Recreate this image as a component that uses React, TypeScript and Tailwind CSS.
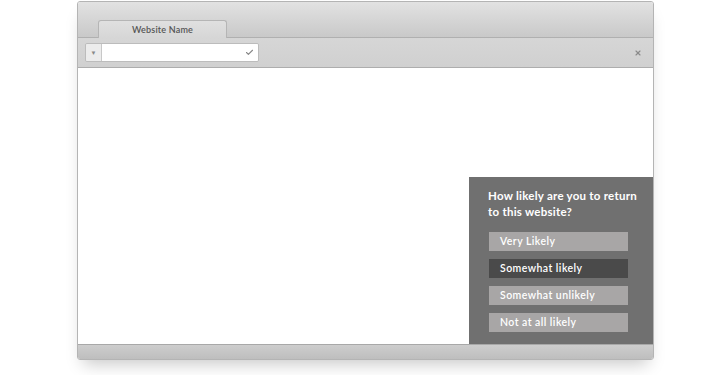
import { Check, X } from "lucide-react";

const options = [
  { label: "Very Likely", active: false },
  { label: "Somewhat likely", active: true },
  { label: "Somewhat unlikely", active: false },
  { label: "Not at all likely", active: false },
];

export default function App() {
  return (
    <div className="w-[716px] h-[375px] bg-white overflow-hidden pt-px" style={{ fontFamily: "Lato, 'Open Sans', sans-serif" }}>
      <div className="ml-[77px] w-[577px] h-[359px] flex flex-col rounded-[3px] border border-[#b4b4b4] overflow-hidden shadow-[0_10px_16px_-6px_rgba(0,0,0,0.22)]">
        {/* tab row */}
        <div className="h-[36px] shrink-0 flex items-end pl-[20px] bg-gradient-to-b from-[#e2e2e2] to-[#c9c9c9] border-b border-[#b0b0b0]">
          <div className="w-[129px] h-[18px] -mb-px rounded-t-[3px] border border-b-0 border-[#b5b5b5] bg-gradient-to-b from-[#e0e0e0] to-[#d6d6d6] flex items-center justify-center text-[9px] text-[#555] font-semibold tracking-[0.2px]">
            Website Name
          </div>
        </div>

        {/* toolbar */}
        <div className="h-[30px] shrink-0 flex items-center justify-between pl-[7px] pr-[11px] bg-gradient-to-b from-[#d6d6d6] to-[#d0d0d0] border-b border-[#adadad]">
          <div className="w-[174px] h-[19px] flex border border-[#bcbcbc] rounded-[2px] overflow-hidden">
            <div className="w-[16px] bg-[#ececec] border-r border-[#c8c8c8] flex items-center justify-center text-[6px] text-[#888]">▼</div>
            <div className="flex-1 bg-white flex items-center justify-end pr-[4px]">
              <Check size={9} strokeWidth={3} className="text-[#888]" />
            </div>
          </div>
          <X size={8} strokeWidth={3.5} className="text-[#8a8a8a]" />
        </div>

        {/* page content */}
        <div className="flex-1 bg-white flex justify-end items-end">
          <div className="w-[184px] h-[167px] bg-[#707070] pl-[19px] pt-[11px]">
            <p className="text-[11.5px] leading-[16px] font-bold text-white w-[156px] tracking-[0.25px]">
              How likely are you to return to this website?
            </p>
            <div className="mt-[12px] flex flex-col gap-[8px] w-[139px] ml-px">
              {options.map((o) => (
                <div
                  key={o.label}
                  className={`h-[19px] flex items-center pl-[11px] text-[10.5px] font-semibold text-white tracking-[0.45px] ${o.active ? "bg-[#4a4a4a]" : "bg-[#a8a6a6]"}`}
                >
                  {o.label}
                </div>
              ))}
            </div>
          </div>
        </div>

        {/* bottom bar */}
        <div className="h-[15px] shrink-0 bg-gradient-to-b from-[#cdcdcd] to-[#bebebe] border-t border-[#a8a8a8]" />
      </div>
    </div>
  );
}
